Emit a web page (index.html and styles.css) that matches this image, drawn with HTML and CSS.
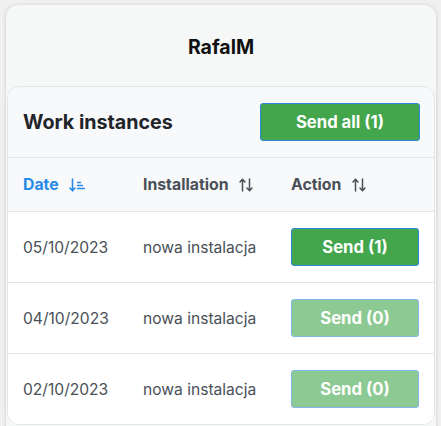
FILE: index.html
```html
<!DOCTYPE html>
<html>
<head>
<meta charset="utf-8">
<link rel="stylesheet" href="styles.css">
</head>
<body>
<div class="page">
  <div class="card">
    <div class="user">RafalM</div>
    <div class="panel">
      <div class="panel-head">
        <h2 class="panel-title">Work instances</h2>
        <button class="btn btn-all">Send all (1)</button>
      </div>
      <div class="table">
        <div class="row head">
          <div class="cell th active">Date
            <svg class="sort" viewBox="0 0 16 16" width="16" height="16"><path d="M3.5 2v11.5M1 11l2.5 2.8L6 11" fill="none" stroke="currentColor" stroke-width="1.6" stroke-linecap="round" stroke-linejoin="round"/><path d="M8.5 5.5h3M8.5 8.5h5M8.5 11.5h7" fill="none" stroke="currentColor" stroke-width="1.3" stroke-linecap="round"/></svg>
          </div>
          <div class="cell th">Installation
            <svg class="sort" viewBox="0 0 16 16" width="16" height="16"><path d="M4.5 14V2.5M2 5l2.5-2.8L7 5M11.5 2v11.5M9 11l2.5 2.8L14 11" fill="none" stroke="currentColor" stroke-width="1.5" stroke-linecap="round" stroke-linejoin="round"/></svg>
          </div>
          <div class="cell th">Action
            <svg class="sort" viewBox="0 0 16 16" width="16" height="16"><path d="M4.5 14V2.5M2 5l2.5-2.8L7 5M11.5 2v11.5M9 11l2.5 2.8L14 11" fill="none" stroke="currentColor" stroke-width="1.5" stroke-linecap="round" stroke-linejoin="round"/></svg>
          </div>
        </div>
        <div class="row body">
          <div class="cell">05/10/2023</div>
          <div class="cell">nowa instalacja</div>
          <div class="cell"><button class="btn btn-row">Send (1)</button></div>
        </div>
        <div class="row body">
          <div class="cell">04/10/2023</div>
          <div class="cell">nowa instalacja</div>
          <div class="cell"><button class="btn btn-row disabled" disabled>Send (0)</button></div>
        </div>
        <div class="row body">
          <div class="cell">02/10/2023</div>
          <div class="cell">nowa instalacja</div>
          <div class="cell"><button class="btn btn-row disabled" disabled>Send (0)</button></div>
        </div>
      </div>
    </div>
  </div>
</div>
</body>
</html>
```
FILE: styles.css
```css
* { box-sizing: border-box; }
html, body { margin: 0; padding: 0; }
body {
  background: #f0f0f0;
  font-family: Inter, "Noto Sans", sans-serif;
  color: #495057;
  height: 426px;
  overflow: hidden;
}
.page { padding: 5px 5px 0 6px; }
.card {
  background: #f6f7f7;
  border-radius: 12px;
  box-shadow: 0 0 4px rgba(0,0,0,0.12), 0 1px 2px rgba(0,0,0,0.08);
  height: 460px;
}
.user {
  height: 81px;
  display: flex;
  align-items: center;
  justify-content: center;
  font-size: 19.5px;
  font-weight: 700;
  color: #111;
  padding-top: 2px;
}
.panel {
  margin: 0 1px 0 1px;
  border: 1px solid #e4e6e9;
  border-radius: 12px;
  background: #f8f9fa;
  overflow: hidden;
}
.panel-head {
  height: 70px;
  display: flex;
  align-items: center;
  justify-content: space-between;
  padding: 0 14px 0 15px;
}
.panel-title {
  margin: 0;
  font-size: 19.7px;
  font-weight: 700;
  color: #212529;
}
.btn {
  font-family: inherit;
  font-weight: 700;
  font-size: 16.7px;
  color: #fff;
  background: #43a64c;
  border: 1px solid #2f86dc;
  border-radius: 3px;
  cursor: pointer;
}
.btn-all { width: 160px; height: 38px; }
.btn-row { width: 128px; height: 38px; }
.btn.disabled { opacity: 0.6; }
.table { border-top: 1px solid #e2e5e8; }
.row {
  display: grid;
  grid-template-columns: 120px 148px 1fr;
}
.row.head { height: 53px; background: #f8f9fa; }
.row.body { height: 71px; background: #fff; border-top: 1px solid #e2e5e8; }
.cell {
  display: flex;
  align-items: center;
  padding-left: 15px;
  font-size: 15.6px;
}
.th { font-weight: 700; color: #495057; gap: 10px; font-size: 15.8px; }
.th.active { color: #2a8ae8; }
.sort { flex: none; }
.row.body .cell:last-child { padding-left: 15px; padding-right: 16px; }
```
